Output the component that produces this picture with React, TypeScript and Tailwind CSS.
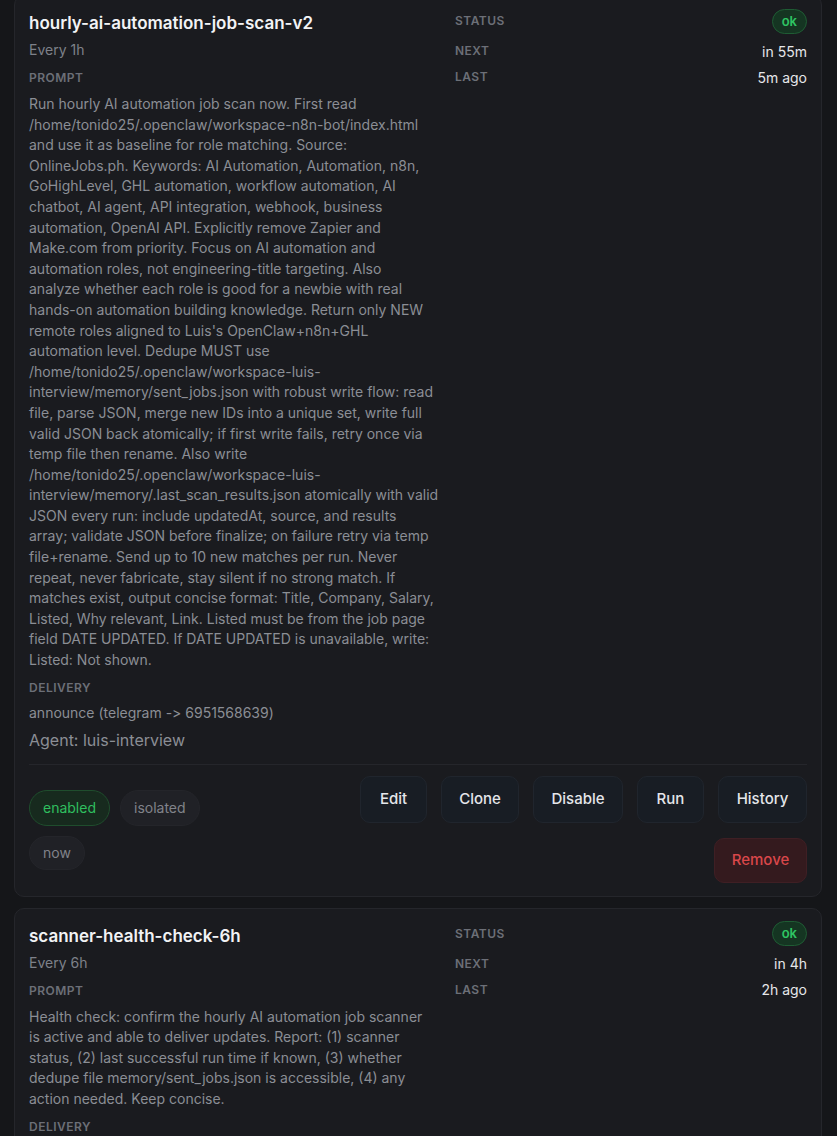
import React from "react";

type Job = {
  name: string;
  every: string;
  prompt: string[];
  delivery: string;
  agent: string;
  next: string;
  last: string;
  first?: boolean;
};

const jobs: Job[] = [
  {
    name: "hourly-ai-automation-job-scan-v2",
    every: "Every 1h",
    prompt: [
      "Run hourly AI automation job scan now. First read",
      "/home/tonido25/.openclaw/workspace-n8n-bot/index.html",
      "and use it as baseline for role matching. Source:",
      "OnlineJobs.ph. Keywords: AI Automation, Automation, n8n,",
      "GoHighLevel, GHL automation, workflow automation, AI",
      "chatbot, AI agent, API integration, webhook, business",
      "automation, OpenAI API. Explicitly remove Zapier and",
      "Make.com from priority. Focus on AI automation and",
      "automation roles, not engineering-title targeting. Also",
      "analyze whether each role is good for a newbie with real",
      "hands-on automation building knowledge. Return only NEW",
      "remote roles aligned to Luis's OpenClaw+n8n+GHL",
      "automation level. Dedupe MUST use",
      "/home/tonido25/.openclaw/workspace-luis-",
      "interview/memory/sent_jobs.json with robust write flow: read",
      "file, parse JSON, merge new IDs into a unique set, write full",
      "valid JSON back atomically; if first write fails, retry once via",
      "temp file then rename. Also write",
      "/home/tonido25/.openclaw/workspace-luis-",
      "interview/memory/.last_scan_results.json atomically with valid",
      "JSON every run: include updatedAt, source, and results",
      "array; validate JSON before finalize; on failure retry via temp",
      "file+rename. Send up to 10 new matches per run. Never",
      "repeat, never fabricate, stay silent if no strong match. If",
      "matches exist, output concise format: Title, Company, Salary,",
      "Listed, Why relevant, Link. Listed must be from the job page",
      "field DATE UPDATED. If DATE UPDATED is unavailable, write:",
      "Listed: Not shown.",
    ],
    delivery: "announce (telegram -> 6951568639)",
    agent: "Agent: luis-interview",
    next: "in 55m",
    last: "5m ago",
    first: true,
  },
  {
    name: "scanner-health-check-6h",
    every: "Every 6h",
    prompt: [
      "Health check: confirm the hourly AI automation job scanner",
      "is active and able to deliver updates. Report: (1) scanner",
      "status, (2) last successful run time if known, (3) whether",
      "dedupe file memory/sent_jobs.json is accessible, (4) any",
      "action needed. Keep concise.",
    ],
    delivery: "announce (telegram -> 6951568639)",
    agent: "Agent: luis-interview",
    next: "in 4h",
    last: "2h ago",
  },
];

function Label({ children }: { children: React.ReactNode }) {
  return (
    <div className="text-[12px] leading-[16px] font-semibold uppercase tracking-[0.04em] text-[#6c6f77]">
      {children}
    </div>
  );
}

function Btn({ children, w }: { children: React.ReactNode; w: string }) {
  return (
    <button
      className={
        "h-[47px] rounded-[10px] bg-[#181d24] border border-[#20252d] text-[15px] font-medium text-[#e4e6ea] text-center " +
        w
      }
    >
      {children}
    </button>
  );
}

function Card({ job }: { job: Job }) {
  return (
    <div
      className={
        "rounded-[10px] border border-[#25262b] bg-[#1a1b1f] px-[14px] pb-[13px] " +
        (job.first ? "-mt-[5px] pt-[14px]" : "pt-[14px]")
      }
    >
      <div className="grid grid-cols-[412px_1fr] gap-x-[14px]">
        <div className="flex flex-col">
          <div className="text-[17px] leading-[26px] font-semibold text-[#f2f3f5]">{job.name}</div>
          <div className="mt-[4px] text-[14px] leading-[20px] text-[#7e8189]">{job.every}</div>
          <div className="mt-[10px]">
            <Label>PROMPT</Label>
          </div>
          <div className="mt-[8px] text-[14px] leading-[20.6px] text-[#8b8e95] whitespace-nowrap">
            {job.prompt.map((l, i) => (
              <div key={i}>{l}</div>
            ))}
          </div>
          <div className="mt-[9px]">
            <Label>DELIVERY</Label>
          </div>
          <div className="mt-[7px] text-[14px] leading-[20px] text-[#8b8e95] [font-feature-settings:'calt'_0]">
            {job.delivery}
          </div>
          <div className="mt-[6px] text-[16px] leading-[22px] text-[#8b8e95]">{job.agent}</div>
        </div>
        <div className="flex flex-col gap-[8px]">
          <div className="flex items-center justify-between h-[26px] -mt-[2px]">
            <Label>STATUS</Label>
            <span className="h-[25px] px-[9px] rounded-full border border-[#1f5c34] bg-[#153522] text-[13px] font-semibold leading-[23px] text-[#2fc463]">
              ok
            </span>
          </div>
          <div className="flex items-center justify-between h-[18px]">
            <Label>NEXT</Label>
            <span className="text-[14px] text-[#e6e7ea]">{job.next}</span>
          </div>
          <div className="flex items-center justify-between h-[18px]">
            <Label>LAST</Label>
            <span className="text-[14px] text-[#e6e7ea]">{job.last}</span>
          </div>
        </div>
      </div>
      <div className="mt-[13px] border-t border-[#25262b]" />
      <div className="pt-[11px] flex items-start justify-between">
        <div className="mt-[14px] w-[200px] flex flex-wrap gap-x-[10px] gap-y-[10px]">
          <span className="h-[36px] px-[13px] rounded-full border border-[#1f4d2d] bg-[#172a1e] text-[14px] leading-[34px] text-[#2fbf5f]">
            enabled
          </span>
          <span className="h-[36px] px-[13px] rounded-full border border-[#24252a] bg-[#202126] text-[14px] leading-[34px] text-[#80838a]">
            isolated
          </span>
          <span className="h-[34px] px-[13px] rounded-full border border-[#24252a] bg-[#202126] text-[14px] leading-[32px] text-[#80838a]">
            now
          </span>
        </div>
        <div className="w-[460px] flex flex-wrap justify-end gap-x-[14px] gap-y-[15px]">
          <Btn w="w-[67px]">Edit</Btn>
          <Btn w="w-[78px]">Clone</Btn>
          <Btn w="w-[90px]">Disable</Btn>
          <Btn w="w-[67px]">Run</Btn>
          <Btn w="w-[89px]">History</Btn>
          <button className="w-[93px] h-[45px] rounded-[10px] bg-[#341a1e] border border-[#3f1f24] text-[15px] font-medium text-[#d9474a] text-center">
            Remove
          </button>
        </div>
      </div>
    </div>
  );
}

export default function App() {
  return (
    <div
      className="min-h-screen bg-[#151619] pl-[14px] pr-[15px] pb-[20px] overflow-hidden"
      style={{ fontFamily: "Inter, 'Noto Sans', sans-serif" }}
    >
      <div className="flex flex-col gap-[11px]">
        {jobs.map((j) => (
          <Card key={j.name} job={j} />
        ))}
      </div>
    </div>
  );
}
